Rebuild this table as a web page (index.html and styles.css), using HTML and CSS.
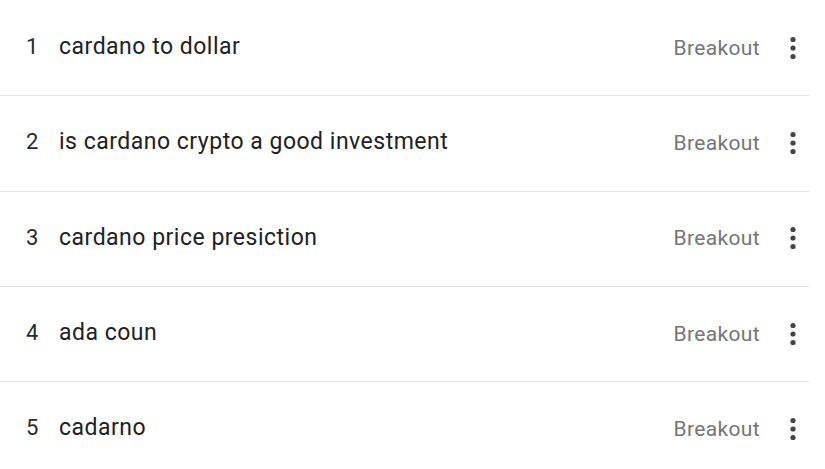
FILE: index.html
```html
<!DOCTYPE html>
<html>
<head>
<meta charset="utf-8">
<link rel="stylesheet" href="styles.css">
</head>
<body>
<div class="list">
  <div class="row"><span class="num">1</span><span class="term">cardano to dollar</span><span class="value">Breakout</span><span class="more"><svg width="8" height="24" viewBox="0 0 8 24"><circle cx="4" cy="3.5" r="2.6"/><circle cx="4" cy="12" r="2.6"/><circle cx="4" cy="20.5" r="2.6"/></svg></span></div>
  <div class="row"><span class="num">2</span><span class="term">is cardano crypto a good investment</span><span class="value">Breakout</span><span class="more"><svg width="8" height="24" viewBox="0 0 8 24"><circle cx="4" cy="3.5" r="2.6"/><circle cx="4" cy="12" r="2.6"/><circle cx="4" cy="20.5" r="2.6"/></svg></span></div>
  <div class="row"><span class="num">3</span><span class="term">cardano price presiction</span><span class="value">Breakout</span><span class="more"><svg width="8" height="24" viewBox="0 0 8 24"><circle cx="4" cy="3.5" r="2.6"/><circle cx="4" cy="12" r="2.6"/><circle cx="4" cy="20.5" r="2.6"/></svg></span></div>
  <div class="row"><span class="num">4</span><span class="term">ada coun</span><span class="value">Breakout</span><span class="more"><svg width="8" height="24" viewBox="0 0 8 24"><circle cx="4" cy="3.5" r="2.6"/><circle cx="4" cy="12" r="2.6"/><circle cx="4" cy="20.5" r="2.6"/></svg></span></div>
  <div class="row"><span class="num">5</span><span class="term">cadarno</span><span class="value">Breakout</span><span class="more"><svg width="8" height="24" viewBox="0 0 8 24"><circle cx="4" cy="3.5" r="2.6"/><circle cx="4" cy="12" r="2.6"/><circle cx="4" cy="20.5" r="2.6"/></svg></span></div>
</div>
</body>
</html>
```

FILE: styles.css
```css
html, body {
  margin: 0;
  padding: 0;
  background: #ffffff;
}
body {
  font-family: Roboto, "Liberation Sans", sans-serif;
  width: 825px;
  height: 469px;
  overflow: hidden;
}
.list {
  width: 809px;
  padding-top: 1px;
}
.row {
  box-sizing: border-box;
  height: 95.33px;
  display: flex;
  align-items: center;
  padding-bottom: 3px;
  border-bottom: 1.5px solid #e2e2e2;
}
.num {
  width: 59px;
  box-sizing: border-box;
  padding-left: 26px;
  font-size: 22px;
  color: #2a2a2a;
}
.term {
  flex: 1;
  font-size: 23px;
  letter-spacing: 0.5px;
  color: #202124;
}
.value {
  font-size: 21px;
  letter-spacing: 0.35px;
  color: #757575;
  margin-right: 29px;
  position: relative;
  top: 1px;
}
.more {
  display: flex;
  width: 20px;
  fill: #454545;
  position: relative;
  top: 1px;
}
```
